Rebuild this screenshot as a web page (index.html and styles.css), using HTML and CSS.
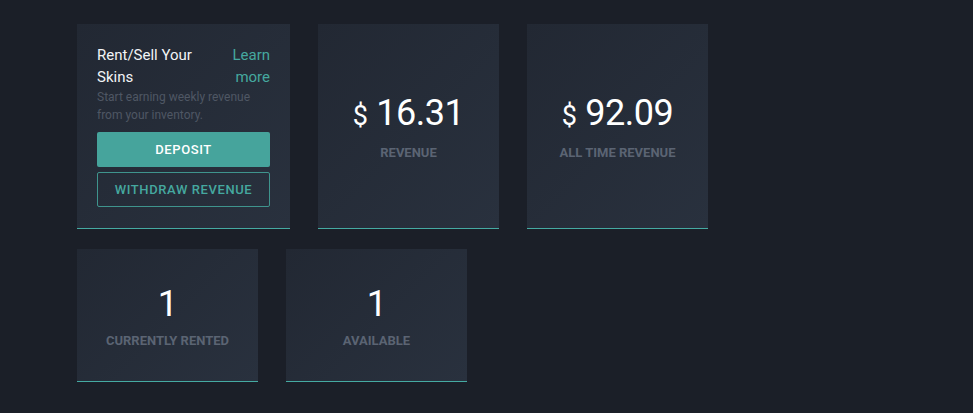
FILE: index.html
```html
<!DOCTYPE html>
<html>
<head>
<meta charset="utf-8">
<link rel="stylesheet" href="styles.css">
</head>
<body>
<div class="dashboard">
  <div class="row">
    <div class="card card-intro">
      <div class="intro-head">
        <div class="intro-title">Rent/Sell Your Skins</div>
        <a class="intro-link" href="#">Learn more</a>
      </div>
      <p class="intro-desc">Start earning weekly revenue from your inventory.</p>
      <button class="btn btn-primary">DEPOSIT</button>
      <button class="btn btn-outline">WITHDRAW REVENUE</button>
    </div>
    <div class="card card-stat">
      <div class="stat-value"><span class="currency">$</span> 16.31</div>
      <div class="stat-label">REVENUE</div>
    </div>
    <div class="card card-stat">
      <div class="stat-value"><span class="currency">$</span> 92.09</div>
      <div class="stat-label">ALL TIME REVENUE</div>
    </div>
  </div>
  <div class="row">
    <div class="card card-stat card-small">
      <div class="stat-value">1</div>
      <div class="stat-label">CURRENTLY RENTED</div>
    </div>
    <div class="card card-stat card-small">
      <div class="stat-value">1</div>
      <div class="stat-label">AVAILABLE</div>
    </div>
  </div>
</div>
</body>
</html>
```
FILE: styles.css
```css
html, body {
  margin: 0;
  padding: 0;
  background: #1b1f28;
  font-family: Roboto, "Liberation Sans", sans-serif;
  color: #ffffff;
}

.dashboard {
  display: flex;
  flex-direction: column;
  gap: 20px;
  padding: 24px 0 0 77px;
}

.row {
  display: flex;
  gap: 28px;
  align-items: stretch;
}

.card {
  background: linear-gradient(135deg, #222833 0%, #29313e 100%);
  border-bottom: 1px solid #45aaa2;
  box-sizing: border-box;
}

.card-intro {
  width: 213px;
  padding: 20px 20px 21px;
  display: flex;
  flex-direction: column;
}

.intro-head {
  display: flex;
  justify-content: space-between;
  font-size: 15px;
  line-height: 22px;
}

.intro-title {
  flex: 1;
  color: #f2f4f6;
}

.intro-link {
  width: 50px;
  text-align: right;
  color: #45a89f;
  text-decoration: none;
}

.intro-desc {
  margin: 0;
  font-size: 12px;
  line-height: 18px;
  color: #4f5764;
}

.btn {
  display: block;
  width: 100%;
  height: 35px;
  border-radius: 2px;
  font-family: Roboto, "Liberation Sans", sans-serif;
  font-size: 13px;
  font-weight: 500;
  letter-spacing: 0.6px;
  cursor: pointer;
}

.btn-primary {
  margin-top: 8px;
  background: #46a49c;
  border: none;
  color: #ffffff;
}

.btn-outline {
  margin-top: 5px;
  background: transparent;
  border: 1px solid #3f948d;
  color: #45a89f;
}

.card-stat {
  width: 181px;
  display: flex;
  flex-direction: column;
  align-items: center;
  justify-content: center;
}

.card-small {
  height: 133px;
}

.stat-value {
  font-size: 36px;
  line-height: 43px;
  letter-spacing: -0.5px;
  color: #ffffff;
}

.currency {
  font-size: 27px;
  letter-spacing: 0;
}

.stat-label {
  margin-top: 7px;
  font-size: 13px;
  line-height: 15px;
  font-weight: 700;
  color: #5b6473;
}
```
